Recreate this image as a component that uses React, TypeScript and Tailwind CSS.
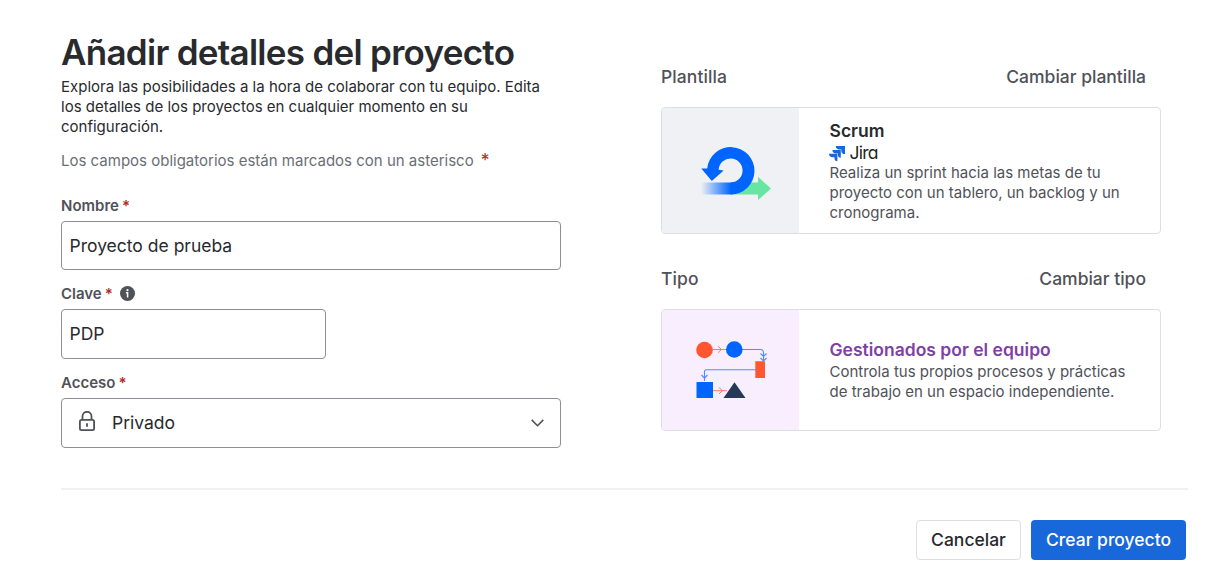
import type { ReactNode } from "react";

const Required = () => <span className="ml-[3px] font-semibold text-[#ae2e24]">*</span>;

function FieldLabel({ children }: { children: ReactNode }) {
  return <div className="flex h-5 items-center whitespace-nowrap text-[15px] leading-5 font-semibold text-[#505258]">{children}</div>;
}

function InfoIcon() {
  return (
    <svg className="mb-px ml-[7px] size-[15px]" viewBox="0 0 15 15" fill="none">
      <circle cx="7.5" cy="7.5" r="7.5" fill="#505258" />
      <circle cx="7.5" cy="4.2" r="1.1" fill="#fff" />
      <path d="M5.9 6.7h1.7v4.8" stroke="#fff" strokeWidth="1.5" />
    </svg>
  );
}

function LockIcon() {
  return (
    <svg className="mb-[4px] h-5 w-4" viewBox="0 0 16 20" fill="none" stroke="#505258" strokeWidth="1.8">
      <rect x="0.9" y="8.9" width="14.2" height="10.2" rx="1.6" />
      <path d="M3.5 8.9V5.3a4.5 4.5 0 0 1 9 0v3.6" />
      <path d="M8 12.3v3.4" />
    </svg>
  );
}

function ScrumArt() {
  return (
    <svg className="h-[70px] w-[90px]" viewBox="0 0 90 70">
      <defs>
        <linearGradient id="trail" x1="11" x2="41" y1="0" y2="0" gradientUnits="userSpaceOnUse">
          <stop stopColor="#0065ff" stopOpacity="0" />
          <stop offset="1" stopColor="#0065ff" />
        </linearGradient>
      </defs>
      <path d="M41 42.5h27V36.8L81 48.5 68 60V54.5H41z" fill="#67e5a3" />
      <path d="M11 42.5h31v12H11z" fill="url(#trail)" />
      <path d="M41 54.5A23.7 23.7 0 1 0 17.2 28.5H11.3L21.8 41 33.6 30.4 28.6 29.7A12 12 0 1 1 41 42.5z" fill="#0065ff" />
    </svg>
  );
}

function FlowArt() {
  return (
    <svg className="h-20 w-[95px]" viewBox="0 0 95 80" fill="none">
      <g stroke="#ff7c66">
        <path d="M27 19.5h14M33 16.3l3.5 3.2-3.5 3.2" />
        <path d="M27 60.7h15M34 57.5l3.5 3.2-3.5 3.2" />
      </g>
      <g stroke="#4c8dff" strokeWidth="1.1">
        <path d="M57 19.5h18.5a3 3 0 0 1 3 3V31M75.5 23.5l3 3 3-3M75.5 28l3 3 3-3" />
        <path d="M71 39.8H21.5a2 2 0 0 0-2 2V51M16.5 45l3 3.2 3-3.2" />
      </g>
      <circle cx="19.5" cy="20" r="8.3" fill="#ff5630" />
      <circle cx="49.3" cy="19.5" r="8.3" fill="#0065ff" />
      <path d="M70.3 31.3H80V48h-9.7z" fill="#ff5630" />
      <path d="M11.5 52H28v16H11.5z" fill="#0065ff" />
      <path d="M49.5 52.2 60.5 68h-22z" fill="#253858" />
    </svg>
  );
}

function JiraMark() {
  return (
    <svg className="-ml-px h-[15px] w-4" viewBox="0 0 16 16" preserveAspectRatio="none" fill="#1868db">
      <path d="M6.8 0H16V8.8C13.8 8.8 12.3 7.4 12.3 5.4V3.7H10.4C8.2 3.7 6.8 2.2 6.8 0z" />
      <path d="M3.4 4.2H11.8V12.4C9.8 12.4 8.9 11 8.9 9.2V7.9H7C4.8 7.9 3.4 6.4 3.4 4.2z" />
      <path d="M0 8.3H8.4V16C6.4 16 5.5 14.9 5.5 13.2V12H3.6C1.4 12 0 10.5 0 8.3z" />
    </svg>
  );
}

export default function App() {
  return (
    <div className="h-[583px] w-[1232px] overflow-hidden bg-white pl-[61px] font-['Inter',sans-serif] text-[#292a2e]">
      <main className="flex h-[488px] gap-[100px]">
        <section className="w-[500px] pt-8">
          <h1 className="h-[45px] whitespace-nowrap text-[35px] leading-10 font-semibold tracking-[-0.72px]">Añadir detalles del proyecto</h1>
          <p className="whitespace-nowrap text-[15px] leading-5">
            Explora las posibilidades a la hora de colaborar con tu equipo. Edita<br />
            los detalles de los proyectos en cualquier momento en su<br />
            configuración.
          </p>
          <p className="mt-[14px] flex h-5 whitespace-nowrap text-[15px] leading-5 text-[#6b6e76]">
            Los campos obligatorios están marcados con un asterisco
            <span className="ml-[7px] text-[17.5px] leading-[18px] text-[#ae2e24]">*</span>
          </p>
          <div className="mt-[25px]">
            <FieldLabel>Nombre<Required /></FieldLabel>
            <input aria-label="Nombre" defaultValue="Proyecto de prueba" className="mt-[5px] block h-[49px] w-full rounded-[4px] border border-[#8c8f97] px-[7.5px] text-[17.5px]" />
          </div>
          <div className="mt-[14px]">
            <FieldLabel>Clave<Required /><InfoIcon /></FieldLabel>
            <input aria-label="Clave" defaultValue="PDP" className="mt-[5px] block h-[50px] w-[265px] rounded-[4px] border border-[#8c8f97] px-[7.5px] pb-[2px] text-[17.5px]" />
          </div>
          <div className="mt-[14px]">
            <FieldLabel>Acceso<Required /></FieldLabel>
            <button className="mt-[5px] flex h-[50px] w-full items-center rounded-[4px] border border-[#8c8f97] pr-[16px] pl-[17px] text-[17.5px]">
              <LockIcon />
              <span className="ml-[17px]">Privado</span>
              <svg className="ml-auto h-2 w-[13px]" viewBox="0 0 13 8" fill="none" stroke="#505258" strokeWidth="1.6">
                <path d="m.7.9 5.8 5.8L12.3.9" />
              </svg>
            </button>
          </div>
        </section>

        <section className="w-[500px] pt-[65px]">
          <header className="flex h-6 items-center justify-between pr-[15px] text-[17.5px] font-medium text-[#505258]">
            <h2 className="tracking-[0.1px]">Plantilla</h2><button>Cambiar plantilla</button>
          </header>
          <article className="mt-[18px] flex h-[127px] overflow-hidden rounded-[4px] border border-[#dddee1]">
            <div className="w-[137px] bg-[#f0f1f4] pt-8 pl-7"><ScrumArt /></div>
            <div className="pt-3 pl-[30.5px]">
              <h3 className="h-[23px] text-[17.5px] leading-[22px] font-semibold">Scrum</h3>
              <div className="flex h-[20px] items-center gap-[5px] text-[17.5px] leading-5 tracking-[-0.75px] text-[#1e1f21] [font-feature-settings:'cv11']"><JiraMark />Jira</div>
              <p className="whitespace-nowrap text-[15px] leading-5 text-[#505258]">Realiza un sprint hacia las metas de tu<br />proyecto con un tablero, un backlog y un<br />cronograma.</p>
            </div>
          </article>
          <header className="mt-[33px] flex h-6 items-center justify-between pr-[15px] text-[17.5px] font-medium text-[#505258]">
            <h2 className="tracking-[0.1px]">Tipo</h2><button>Cambiar tipo</button>
          </header>
          <article className="mt-[18px] flex h-[122px] overflow-hidden rounded-[4px] border border-[#dddee1]">
            <div className="w-[137px] bg-[#f8eefe] pt-5 pl-[23px]"><FlowArt /></div>
            <div className="pt-[29px] pl-[30.5px]">
              <h3 className="h-[23px] text-[17.5px] leading-[22px] font-semibold text-[#803fa5]">Gestionados por el equipo</h3>
              <p className="whitespace-nowrap text-[15px] leading-5 text-[#505258]">Controla tus propios procesos y prácticas<br />de trabajo en un espacio independiente.</p>
            </div>
          </article>
        </section>
      </main>
      <footer className="flex w-[1127px] justify-end gap-[10px] border-t-2 border-[#f0f1f2] pt-[30px] pr-[2px] text-[17.5px] font-medium">
        <button className="h-10 w-[105px] rounded-[4px] border border-[#dddee1]">Cancelar</button>
        <button className="h-10 w-[155px] rounded-[4px] bg-[#1868db] text-white">Crear proyecto</button>
      </footer>
    </div>
  );
}
